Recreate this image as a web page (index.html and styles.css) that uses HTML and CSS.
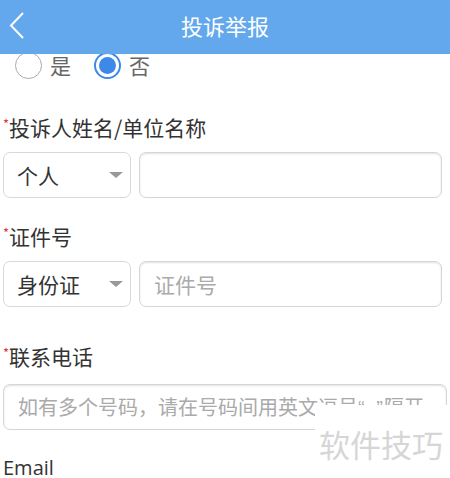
FILE: index.html
```html
<!DOCTYPE html>
<html lang="zh-CN">
<head>
  <meta charset="UTF-8" />
  <title>投诉举报</title>
  <link rel="stylesheet" href="styles.css">
</head>
<body>

<div class="topbar">
  <svg class="back" width="16" height="28" viewBox="0 0 16 28">
    <polyline points="14,1 2,13.5 14,26" fill="none" stroke="#fff" stroke-width="2" />
  </svg>
  <span class="title">投诉举报</span>
</div>

<div class="form">
  <div class="radios">
    <span class="radio"></span><span class="radio-text">是</span>
    <span class="radio checked"></span><span class="radio-text">否</span>
  </div>

  <div class="label first"><i>*</i>投诉人姓名/单位名称</div>
  <div class="row">
    <div class="select">个人<span class="arrow"></span></div>
    <div class="input"></div>
  </div>

  <div class="label"><i>*</i>证件号</div>
  <div class="row">
    <div class="select">身份证<span class="arrow"></span></div>
    <div class="input placeholder">证件号</div>
  </div>

  <div class="label third"><i>*</i>联系电话</div>
  <div class="input wide placeholder">如有多个号码，请在号码间用英文逗号<span class="q">“ ”</span>隔开</div>

  <div class="label email">Email</div>
</div>

<div class="watermark">软件技巧</div>

</body>
</html>
```

FILE: styles.css
```css
body {
  margin: 0;
  width: 450px;
  height: 478px;
  overflow: hidden;
  background: #fff;
  font-family: "Noto Sans CJK SC", "Noto Sans", sans-serif;
  color: #333;
  position: relative;
}
.topbar {
  position: absolute;
  top: 0;
  left: 0;
  right: 0;
  height: 54px;
  background: #63a8ec;
  z-index: 2;
}
.back {
  position: absolute;
  left: 9px;
  top: 12px;
}
.title {
  display: block;
  text-align: center;
  color: #fff;
  font-size: 22px;
  line-height: 50px;
}
.form {
  padding: 52px 0 0 3px;
}
.radios {
  display: flex;
  align-items: center;
  height: 27px;
  padding-left: 12px;
}
.radio {
  width: 27px;
  height: 27px;
  box-sizing: border-box;
  border: 1.5px solid #aaa;
  border-radius: 50%;
}
.radio.checked {
  border: 2px solid #3c89ea;
  padding: 3px;
}
.radio.checked::after {
  content: "";
  display: block;
  width: 17px;
  height: 17px;
  border-radius: 50%;
  background: #3c89ea;
}
.radio-text {
  font-size: 21px;
  color: #666;
  margin: 0 23px 0 8px;
  line-height: 27px;
}
.label {
  font-size: 21px;
  line-height: 24px;
  margin: 26px 0 13px;
}
.label.first {
  margin-top: 36px;
}
.label.third {
  margin-top: 37px;
  margin-bottom: 16px;
}
.label.email {
  font-family: "Open Sans", "Liberation Sans", sans-serif;
  font-size: 20px;
  line-height: 18px;
  margin-top: 29px;
  margin-bottom: 0;
}
.label i {
  font-style: normal;
  color: #d9363e;
  font-size: 13px;
  vertical-align: top;
  line-height: 18px;
}
.row {
  display: flex;
  gap: 8px;
  height: 46px;
}
.select {
  width: 128px;
  box-sizing: border-box;
  border: 1px solid #d8d8d8;
  border-radius: 7px;
  padding-left: 13px;
  font-size: 21px;
  line-height: 44px;
  position: relative;
}
.arrow {
  position: absolute;
  right: 7px;
  top: 19px;
  width: 0;
  height: 0;
  border-left: 7.5px solid transparent;
  border-right: 7.5px solid transparent;
  border-top: 6px solid #999;
}
.input {
  width: 303px;
  height: 46px;
  box-sizing: border-box;
  border: 1px solid #d6d6d6;
  border-radius: 7px;
  box-shadow: inset 0 1px 2px rgba(0, 0, 0, 0.12);
  padding-left: 14px;
  font-size: 21px;
  line-height: 44px;
  white-space: nowrap;
  overflow: hidden;
}
.input.wide {
  width: 444px;
  font-size: 20px;
}
.q {
  font-family: "Liberation Sans", sans-serif;
  white-space: pre;
  letter-spacing: 3px;
  margin-right: -2px;
}
.placeholder {
  color: #aaa;
}
.watermark {
  position: absolute;
  left: 315px;
  top: 405px;
  right: 0;
  bottom: 0;
  background: #fff;
  color: #d6d6d6;
  font-size: 31px;
  line-height: 36px;
  padding: 21px 0 0 4px;
}
```
